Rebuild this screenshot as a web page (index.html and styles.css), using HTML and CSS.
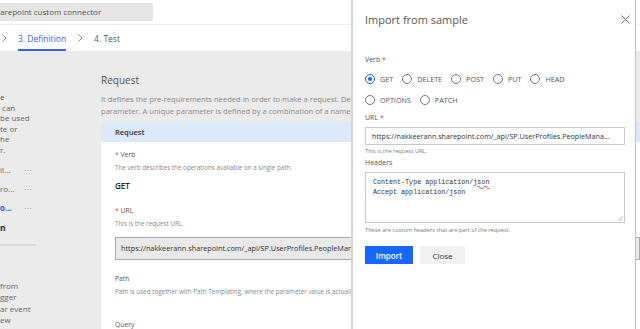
FILE: index.html
```html
<!DOCTYPE html>
<html lang="en">
<head>
<meta charset="UTF-8">
<meta name="viewport" content="width=device-width, initial-scale=1.0">
<title>Sharepoint custom connector</title>
<link rel="stylesheet" href="styles.css">
</head>
<body>

<div class="page">
    <header class="topbar">
        <div class="name-box">arepoint custom connector</div>
    </header>

    <nav class="steps">
        <svg class="chev" width="5" height="8" viewBox="0 0 5 8"><path d="M0.5 0.5 L4 4 L0.5 7.5" fill="none" stroke="#777" stroke-width="0.9"/></svg>
        <span class="step active">3. Definition</span>
        <svg class="chev chev-mid" width="5" height="8" viewBox="0 0 5 8"><path d="M0.5 0.5 L4 4 L0.5 7.5" fill="none" stroke="#777" stroke-width="0.9"/></svg>
        <span class="step">4. Test</span>
    </nav>

    <div class="workspace">
        <aside class="side">
            <div class="side-text">
                <div>e</div>
                <div> can</div>
                <div>be used</div>
                <div>te or</div>
                <div>he</div>
                <div>r.</div>
            </div>
            <div class="side-item"><span>il...</span><span class="dots">···</span></div>
            <div class="side-item"><span>ro...</span><span class="dots">···</span></div>
            <div class="side-item current"><span>o...</span><span class="dots">···</span></div>
            <div class="side-head">n</div>
            <div class="side-rule"></div>
            <div class="side-text lower">
                <div>from</div>
                <div>gger</div>
                <div>ar event</div>
                <div>ew</div>
            </div>
        </aside>

        <main class="content">
            <h2 class="section-title">Request</h2>
            <p class="section-desc">It defines the pre-requirements needed in order to make a request. Describe each parameter.<br>parameter. A unique parameter is defined by a combination of a name and location.</p>

            <div class="card">
                <div class="card-head">Request</div>
                <div class="card-body">
                    <div class="field-label"><span class="req">*</span> Verb</div>
                    <div class="field-help">The verb describes the operations available on a single path.</div>
                    <div class="verb-value">GET</div>

                    <div class="field-label gap"><span class="req">*</span> URL</div>
                    <div class="field-help">This is the request URL.</div>
                    <div class="url-box">https://nakkeerann.sharepoint.com/_api/SP.UserProfiles.PeopleManager/GetMyProperties</div>

                    <div class="field-label path">Path</div>
                    <div class="field-help">Path is used together with Path Templating, where the parameter value is actually part of the operation's URL.</div>

                    <div class="field-label query">Query</div>
                </div>
            </div>
        </main>
    </div>
</div>

<div class="panel">
    <div class="panel-top">
        <h1 class="panel-title">Import from sample</h1>
        <svg class="close-icon" width="9" height="9" viewBox="0 0 9 9"><path d="M0.5 0.5 L8.5 8.5 M8.5 0.5 L0.5 8.5" stroke="#666" stroke-width="0.9"/></svg>
    </div>

    <div class="p-label verb-label">Verb <span class="req">*</span></div>
    <div class="radio-row">
        <label class="radio checked"><span class="dot"></span>GET</label>
        <label class="radio"><span class="dot"></span>DELETE</label>
        <label class="radio"><span class="dot"></span>POST</label>
        <label class="radio"><span class="dot"></span>PUT</label>
        <label class="radio"><span class="dot"></span>HEAD</label>
    </div>
    <div class="radio-row">
        <label class="radio"><span class="dot"></span>OPTIONS</label>
        <label class="radio"><span class="dot"></span>PATCH</label>
    </div>

    <div class="p-label url-label">URL <span class="req">*</span></div>
    <div class="p-input">https://nakkeerann.sharepoint.com/_api/SP.UserProfiles.PeopleMana...</div>
    <div class="p-help">This is the request URL.</div>

    <div class="p-label headers-label">Headers</div>
    <div class="p-textarea">
        <div>Content-Type application/<span class="typo">json</span></div>
        <div>Accept application/json</div>
        <svg class="grip" width="6" height="6" viewBox="0 0 6 6"><path d="M5.5 1 L1 5.5 M5.5 3.5 L3.5 5.5" stroke="#999" stroke-width="0.8"/></svg>
    </div>
    <div class="p-help">These are custom headers that are part of the request.</div>

    <div class="actions">
        <button class="btn-import">Import</button>
        <button class="btn-close">Close</button>
    </div>
</div>

</body>
</html>
```

FILE: styles.css
```css
body {
    margin: 0;
    width: 640px;
    height: 329px;
    overflow: hidden;
    background-color: #ebebeb;
    font-family: "Open Sans", "Noto Sans", sans-serif;
    color: #444;
}

/* Page behind the panel */
.page {
    width: 640px;
}
.topbar {
    height: 24px;
    background-color: #fff;
    border-bottom: 1px solid #ececec;
    display: flex;
    align-items: center;
}
.name-box {
    width: 153px;
    height: 18px;
    line-height: 18px;
    background-color: #e6e6e6;
    font-size: 8px;
    color: #555;
    white-space: nowrap;
}
.steps {
    height: 26px;
    background-color: #fff;
    display: flex;
    align-items: stretch;
    font-size: 8.5px;
    color: #555;
}
.chev {
    align-self: center;
    margin-left: 2px;
}
.chev-mid {
    margin-left: 12px;
}
.step {
    display: flex;
    align-items: center;
    border-bottom: 2px solid transparent;
    border-top: 2px solid transparent;
    margin-left: 11px;
}
.step.active {
    color: #3b5cff;
    border-bottom-color: #3b5cff;
}

.workspace {
    display: flex;
}
.side {
    width: 101px;
    flex: none;
    font-size: 8px;
    color: #666;
    padding-top: 41px;
}
.side-text div {
    height: 10.6px;
    line-height: 10.6px;
    white-space: pre;
}
.side-item {
    display: flex;
    width: 32px;
    justify-content: space-between;
    margin-top: 9px;
    line-height: 10px;
}
.side-item:first-of-type {
    margin-top: 14px;
}
.side-item .dots {
    color: #4a6cff;
    font-size: 8px;
    letter-spacing: 0.5px;
}
.side-item.current span:first-child {
    color: #2b54ff;
    font-weight: 700;
}
.side-head {
    margin-top: 9px;
    font-weight: 700;
    color: #222;
    font-size: 8.5px;
}
.side-rule {
    width: 36px;
    height: 2px;
    background-color: #d9d9d9;
    margin-top: 11px;
}
.side-text.lower {
    margin-top: 34px;
}
.side-text.lower div {
    height: 11.6px;
    line-height: 11.6px;
}

.content {
    flex: 1;
    min-width: 0;
    padding-top: 21px;
}
.section-title {
    margin: 0;
    font-size: 10px;
    font-weight: 400;
    line-height: 16px;
    color: #555;
}
.section-desc {
    margin: 5px 0 0;
    font-size: 7.6px;
    line-height: 12px;
    color: #8a8a8a;
    white-space: nowrap;
}
.card {
    margin-top: 5px;
    background-color: #fff;
}
.card-head {
    height: 20px;
    line-height: 20px;
    background-color: #dbe9fb;
    padding-left: 14px;
    font-size: 7.5px;
    font-weight: 600;
    color: #333;
}
.card-body {
    padding: 8px 0 0 14px;
}
.field-label {
    font-size: 6.8px;
    line-height: 10px;
    color: #555;
}
.req {
    color: #e23c3c;
}
.field-help {
    font-size: 6.3px;
    line-height: 10px;
    color: #888;
    margin-top: 3px;
    white-space: nowrap;
}
.verb-value {
    font-size: 8px;
    font-weight: 600;
    color: #222;
    margin-top: 6px;
    line-height: 14px;
}
.field-label.gap {
    margin-top: 13px;
}
.url-box {
    margin-top: 8px;
    height: 21px;
    line-height: 21px;
    background-color: #e9e9e9;
    border: 1px solid #a8a8a8;
    padding-left: 5px;
    font-size: 7.3px;
    color: #333;
    white-space: nowrap;
    overflow: hidden;
}
.field-label.path {
    margin-top: 14px;
}
.field-label.query {
    margin-top: 23px;
}

/* Import from sample panel */
.panel {
    position: fixed;
    top: 0;
    bottom: 0;
    left: 351px;
    width: 260px;
    padding: 0 10px 0 12px;
    background-color: #fff;
    border-left: 2px solid #d4d4d4;
    border-right: 1px solid #a8c6ea;
    font-size: 8px;
    color: #555;
}
.panel-top {
    display: flex;
    justify-content: space-between;
    align-items: center;
    height: 38px;
}
.panel-title {
    margin: 0;
    font-size: 11px;
    font-weight: 400;
    color: #555;
}
.close-icon {
    margin-right: -5px;
}
.p-label {
    font-size: 7px;
    line-height: 10px;
    color: #555;
}
.verb-label {
    margin-top: 17px;
}
.radio-row {
    display: flex;
    gap: 9px;
    margin-top: 7px;
    height: 13px;
    align-items: center;
}
.radio-row + .radio-row {
    margin-top: 8px;
}
.radio {
    display: flex;
    align-items: center;
    font-size: 7.2px;
    line-height: 10px;
    color: #555;
}
.dot {
    width: 8px;
    height: 8px;
    border: 1px solid #777;
    border-radius: 50%;
    margin-right: 5px;
    display: flex;
    align-items: center;
    justify-content: center;
}
.radio.checked .dot {
    border-color: #1a62ff;
}
.radio.checked .dot::after {
    content: "";
    width: 4px;
    height: 4px;
    border-radius: 50%;
    background-color: #1a62ff;
}
.url-label {
    margin-top: 6.5px;
}
.p-input {
    margin-top: 4px;
    height: 16px;
    line-height: 16px;
    border: 1px solid #c8c8c8;
    padding-left: 6px;
    font-size: 7.2px;
    color: #333;
    white-space: nowrap;
    overflow: hidden;
}
.p-help {
    font-size: 5.7px;
    line-height: 9px;
    color: #777;
    margin-top: 2.5px;
}
.headers-label {
    margin-top: 1.5px;
}
.p-textarea {
    position: relative;
    margin-top: 4px;
    height: 41px;
    border: 1px solid #c8c8c8;
    padding: 4px 7px;
    font-family: "Liberation Mono", "DejaVu Sans Mono", monospace;
    font-size: 6.7px;
    line-height: 10px;
    color: #333;
}
.typo {
    text-decoration: underline wavy #e33;
    text-decoration-thickness: 0.6px;
}
.grip {
    position: absolute;
    right: 1px;
    bottom: 1px;
}
.p-textarea + .p-help {
    margin-top: 3.5px;
}
.actions {
    display: flex;
    gap: 7px;
    margin-top: 11px;
}
.actions button {
    height: 18px;
    border: none;
    font-family: inherit;
    font-size: 8px;
    padding: 0;
}
.btn-import {
    width: 48px;
    background-color: #1767ff;
    color: #fff;
    font-weight: 600;
}
.btn-close {
    width: 45px;
    background-color: #f1f1f1;
    color: #333;
}
```
